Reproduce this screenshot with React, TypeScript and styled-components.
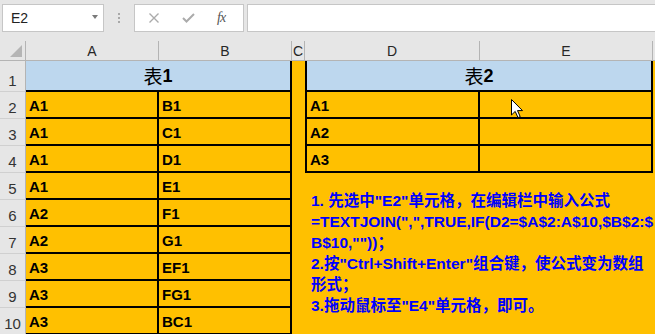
import * as React from "react";
import styled, { createGlobalStyle } from "styled-components";

const COLORS = {
  CHROME: "#e6e6e6",
  LINE: "#c6c6c6",
  HEADER_LINE: "#b4b4b4",
  ORANGE: "#ffc000",
  BLUE: "#bdd7ee",
  NOTE: "#0000ff",
};

const GlobalStyle = createGlobalStyle`
  html, body {
    margin: 0;
    padding: 0;
    background: ${COLORS.CHROME};
    overflow: hidden;
  }
  body {
    font-family: "Liberation Sans", Arial, sans-serif;
  }
`;

const Page = styled.div`
  position: relative;
  width: 655px;
  height: 334px;
  overflow: hidden;
  background: ${COLORS.CHROME};
`;

/* ---------- formula bar ---------- */

const Toolbar = styled.div`
  display: flex;
  align-items: flex-start;
  height: 41px;
  padding: 4px 0 0 2px;
  box-sizing: border-box;
`;

const NameBox = styled.div`
  display: flex;
  align-items: center;
  justify-content: space-between;
  width: 102px;
  height: 28px;
  box-sizing: border-box;
  padding: 0 5px 0 8px;
  background: #fff;
  border: 1px solid ${COLORS.LINE};
  font-size: 14px;
  color: #222;
`;

const DropArrow = styled.span`
  width: 0;
  height: 0;
  border-left: 3.5px solid transparent;
  border-right: 3.5px solid transparent;
  border-top: 4px solid #7a7a7a;
  margin-bottom: 3px;
`;

const Grip = styled.div`
  width: 30px;
  height: 28px;
  display: flex;
  flex-direction: column;
  align-items: center;
  justify-content: center;
  gap: 2px;

  span {
    width: 2px;
    height: 2px;
    background: #a8a8a8;
  }
`;

const FxBox = styled.div`
  display: flex;
  align-items: center;
  width: 110px;
  height: 28px;
  box-sizing: border-box;
  padding-left: 13px;
  gap: 22px;
  background: #fff;
  border: 1px solid ${COLORS.LINE};
`;

const FxLabel = styled.span`
  font-family: "Liberation Serif", "Times New Roman", serif;
  font-style: italic;
  font-size: 14px;
  color: #555;
  letter-spacing: -1px;
`;

const FormulaInput = styled.div`
  flex: 1;
  height: 28px;
  margin-left: 3px;
  box-sizing: border-box;
  background: #fff;
  border: 1px solid ${COLORS.LINE};
  border-right: none;
`;

/* ---------- sheet ---------- */

const Sheet = styled.div`
  display: grid;
  grid-template-columns: 26px 133px 133px 13px 175px 173px 1fr;
  grid-template-rows: 20px 31px repeat(9, 27px);
`;

const Corner = styled.div`
  position: relative;
  border-right: 1px solid ${COLORS.HEADER_LINE};
  border-bottom: 1px solid ${COLORS.HEADER_LINE};
  &::after {
    content: "";
    position: absolute;
    right: 3px;
    bottom: 3px;
    width: 0;
    height: 0;
    border-left: 12px solid transparent;
    border-bottom: 12px solid #b5b5b5;
  }
`;

const ColHead = styled.div<{ $last?: boolean }>`
  display: flex;
  align-items: center;
  justify-content: center;
  font-size: 14px;
  color: #262626;
  border-bottom: 1px solid ${COLORS.HEADER_LINE};
  border-right: ${(p) => (p.$last ? "none" : `1px solid ${COLORS.HEADER_LINE}`)};
  padding-top: 1px;
`;

const RowHead = styled.div`
  display: flex;
  align-items: flex-end;
  justify-content: center;
  padding-bottom: 2px;
  box-sizing: border-box;
  font-size: 15px;
  color: #333;
  border-right: 1px solid ${COLORS.HEADER_LINE};
  border-bottom: 1px solid #d0d0d0;
`;

type CellProps = {
  $blue?: boolean;
  $left?: boolean;
  $right?: boolean;
  $bottom?: boolean;
  $span?: number;
  $center?: boolean;
};

const Cell = styled.div<CellProps>`
  display: flex;
  align-items: flex-end;
  justify-content: ${(p) => (p.$center ? "center" : "flex-start")};
  box-sizing: border-box;
  padding: 0 0 3px 3px;
  grid-column: ${(p) => (p.$span ? `span ${p.$span}` : "auto")};
  background: ${(p) => (p.$blue ? COLORS.BLUE : COLORS.ORANGE)};
  border-left: ${(p) => (p.$left ? "2px solid #000" : "none")};
  border-right: ${(p) => (p.$right ? "2px solid #000" : "none")};
  border-bottom: ${(p) => (p.$bottom ? "2px solid #000" : "none")};
  font-size: 15px;
  font-weight: bold;
  line-height: 17px;
  color: #000;
`;

const TitleCell = styled(Cell)`
  align-items: center;
  padding: 1px 0 0 0;
  font-size: 18px;
  line-height: 22px;
`;

const TitleHan = styled.span`
  font-family: "Noto Sans CJK SC", sans-serif;
  font-weight: 400;
  font-size: 19px;
`;

const Note = styled.div`
  grid-column: 5 / -1;
  grid-row: 6 / 12;
  background: ${COLORS.ORANGE};
  padding: 17px 0 0 6px;
  font-family: "Liberation Sans", "Noto Sans CJK SC", sans-serif;
  font-weight: bold;
  font-size: 15.5px;
  line-height: 21px;
  color: ${COLORS.NOTE};

  div {
    white-space: nowrap;
  }
`;

const Pointer = styled.svg`
  position: absolute;
  left: 511px;
  top: 99px;
`;

const table1 = [
  ["A1", "B1"],
  ["A1", "C1"],
  ["A1", "D1"],
  ["A1", "E1"],
  ["A2", "F1"],
  ["A2", "G1"],
  ["A3", "EF1"],
  ["A3", "FG1"],
  ["A3", "BC1"],
];

const table2 = ["A1", "A2", "A3"];

const noteLines = [
  "1. 先选中\"E2\"单元格，在编辑栏中输入公式",
  "=TEXTJOIN(\",\",TRUE,IF(D2=$A$2:A$10,$B$2:$",
  "B$10,\"\"))；",
  "2.按\"Ctrl+Shift+Enter\"组合键，使公式变为数组",
  "形式；",
  "3.拖动鼠标至\"E4\"单元格，即可。",
];

export default function App() {
  return (
    <Page>
      <GlobalStyle />
      <Toolbar>
        <NameBox>
          E2
          <DropArrow />
        </NameBox>
        <Grip>
          <span />
          <span />
          <span />
        </Grip>
        <FxBox>
          <svg width="12" height="10" viewBox="0 0 12 10">
            <path d="M1.5 0.5 L10.5 9.5 M10.5 0.5 L1.5 9.5" stroke="#ababab" strokeWidth="1.4" />
          </svg>
          <svg width="13" height="10" viewBox="0 0 13 10">
            <path d="M1 5 L4.5 8.5 L12 1" stroke="#ababab" strokeWidth="2" fill="none" />
          </svg>
          <FxLabel>fx</FxLabel>
        </FxBox>
        <FormulaInput />
      </Toolbar>

      <Sheet>
        <Corner />
        {["A", "B", "C", "D", "E", ""].map((c, i) => (
          <ColHead key={i} $last={i === 5}>
            {c}
          </ColHead>
        ))}

        <RowHead>1</RowHead>
        <TitleCell $blue $span={2} $right $bottom $center>
          <TitleHan>表</TitleHan>1
        </TitleCell>
        <Cell />
        <TitleCell $blue $span={2} $left $right $bottom $center>
          <TitleHan>表</TitleHan>2
        </TitleCell>
        <Cell />

        {table1.map(([a, b], i) => (
          <React.Fragment key={i}>
            <RowHead>{i + 2}</RowHead>
            <Cell $right $bottom>{a}</Cell>
            <Cell $right $bottom>{b}</Cell>
            <Cell />
            {i < 3 && (
              <>
                <Cell $left $right $bottom>{table2[i]}</Cell>
                <Cell $right $bottom />
                <Cell />
              </>
            )}
          </React.Fragment>
        ))}

        <Note>
          {noteLines.map((l, i) => (
            <div key={i}>{l}</div>
          ))}
        </Note>
      </Sheet>

      <Pointer width="13" height="20" viewBox="0 0 13 20">
        <path
          d="M0.5 0.5 L0.5 16 L4.2 12.4 L7 18.6 L9.2 17.6 L6.5 11.6 L11.5 11.6 Z"
          fill="#fff"
          stroke="#000"
          strokeWidth="1"
        />
      </Pointer>
    </Page>
  );
}
